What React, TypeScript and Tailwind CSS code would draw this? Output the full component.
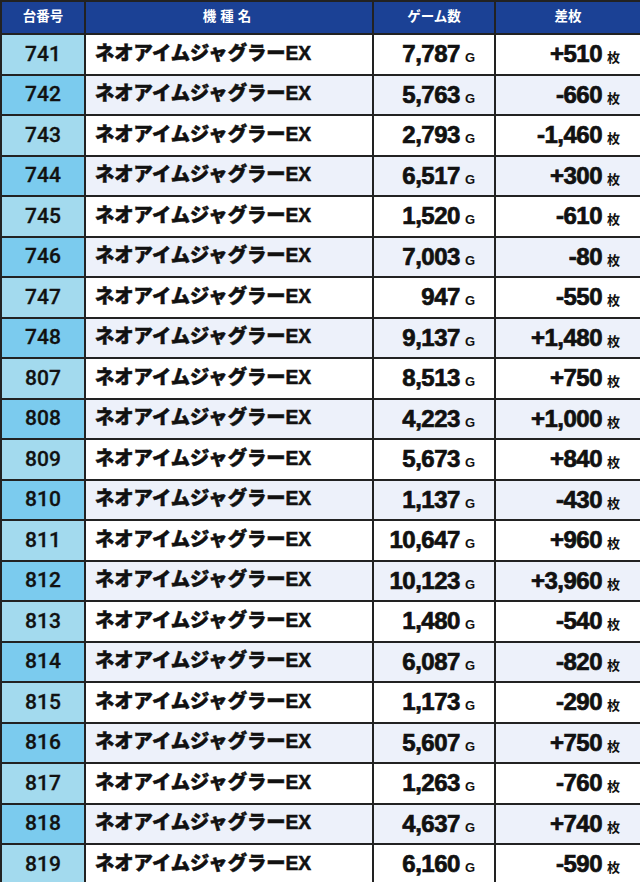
import React from 'react';

const rows: [string, string, string][] = [
  ['741', '7,787', '+510'],
  ['742', '5,763', '-660'],
  ['743', '2,793', '-1,460'],
  ['744', '6,517', '+300'],
  ['745', '1,520', '-610'],
  ['746', '7,003', '-80'],
  ['747', '947', '-550'],
  ['748', '9,137', '+1,480'],
  ['807', '8,513', '+750'],
  ['808', '4,223', '+1,000'],
  ['809', '5,673', '+840'],
  ['810', '1,137', '-430'],
  ['811', '10,647', '+960'],
  ['812', '10,123', '+3,960'],
  ['813', '1,480', '-540'],
  ['814', '6,087', '-820'],
  ['815', '1,173', '-290'],
  ['816', '5,607', '+750'],
  ['817', '1,263', '-760'],
  ['818', '4,637', '+740'],
  ['819', '6,160', '-590'],
];

const App = () => {
  return (
    <div className="w-[640px] h-[882px] bg-white overflow-hidden">
      <table
        className="w-[640px] table-fixed border-collapse border-2 border-[#222]"
        style={{ fontFamily: '"Liberation Sans", "Noto Sans CJK JP", sans-serif' }}
      >
        <colgroup>
          <col className="w-[84px]" />
          <col className="w-[288px]" />
          <col className="w-[122px]" />
          <col className="w-[146px]" />
        </colgroup>
        <thead>
          <tr className="h-[33px] bg-[#1b4195] text-white text-[13.5px] font-bold">
            <th className="border-2 border-[#222] font-bold">台番号</th>
            <th className="border-2 border-[#222] font-bold tracking-[0.3em]">機種名</th>
            <th className="border-2 border-[#222] font-bold">ゲーム数</th>
            <th className="border-2 border-[#222] font-bold">差枚</th>
          </tr>
        </thead>
        <tbody>
          {rows.map(([no, games, diff], i) => {
            const even = i % 2 === 1;
            return (
              <tr key={no} className={`h-[40.5px] ${even ? 'bg-[#edf1fa]' : 'bg-white'} text-[#111]`}>
                <td
                  className={`border-2 border-[#222] text-center text-[21px] font-medium [-webkit-text-stroke:0.3px_#111] ${even ? 'bg-[#7bcbee]' : 'bg-[#a3daee]'}`}
                  style={{ fontFamily: 'Roboto, "Liberation Sans", sans-serif' }}
                >
                  {no}
                </td>
                <td className="border-2 border-[#222] pl-[9px] text-[19.3px] font-black whitespace-nowrap [-webkit-text-stroke:0.5px_#111]">
                  ネオアイムジャグラーEX
                </td>
                <td className="border-2 border-[#222] pr-[19px] text-right whitespace-nowrap">
                  <span className="text-[24px] font-bold tracking-[-0.5px] [-webkit-text-stroke:0.7px_#111]">{games}</span>
                  <span className="ml-[5px] text-[13px] font-bold">G</span>
                </td>
                <td className="border-2 border-[#222] pr-[20px] text-right whitespace-nowrap">
                  <span className="text-[24px] font-bold tracking-[-0.5px] [-webkit-text-stroke:0.7px_#111]">{diff}</span>
                  <span className="ml-[5px] text-[13px] font-bold">枚</span>
                </td>
              </tr>
            );
          })}
        </tbody>
      </table>
    </div>
  );
};

export default App;
